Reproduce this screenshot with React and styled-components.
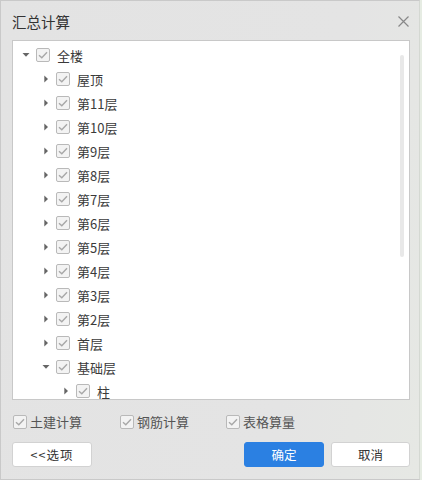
import React from 'react'
import styled, { createGlobalStyle } from 'styled-components'

const GlobalStyle = createGlobalStyle`
  html, body {
    margin: 0;
    padding: 0;
    background: #e6ece3;
  }
  body {
    font-family: "Noto Sans CJK SC", "Noto Sans", sans-serif;
    color: #333;
  }
`

const floors = ['屋顶', '第11层', '第10层', '第9层', '第8层', '第7层', '第6层', '第5层', '第4层', '第3层', '第2层', '首层']

const Dialog = styled.div`
  box-sizing: border-box;
  width: 420px;
  height: 480px;
  background: linear-gradient(100deg, #e3e3e3 0%, #e4e4e4 70%, #e6e8e4 100%);
  border: 1px solid #c9c9c9;
  border-right-color: #d4d8d2;
  display: flex;
  flex-direction: column;
  padding: 0 9px 0 11px;
`

const Header = styled.div`
  height: 39px;
  display: flex;
  align-items: center;
  justify-content: space-between;
  padding-top: 1px;
  box-sizing: border-box;
`

const Title = styled.span`
  font-size: 14.5px;
  color: #333;
`

const CloseButton = styled.button`
  border: none;
  background: transparent;
  padding: 0;
  width: 12px;
  height: 12px;
  margin-right: 1px;
  display: flex;
  align-items: center;
  justify-content: center;
  cursor: pointer;
`

const TreePanel = styled.div`
  box-sizing: border-box;
  height: 360px;
  background: #fff;
  border: 1px solid #c8c8c8;
  position: relative;
  overflow: hidden;
  padding-top: 2px;
`

const ScrollThumb = styled.div`
  position: absolute;
  right: 5px;
  top: 14px;
  width: 4px;
  height: 202px;
  border-radius: 2px;
  background: #e8e8e8;
`

const Row = styled.div`
  height: 24px;
  display: flex;
  align-items: center;
  padding-left: ${(p) => 7 + p.$level * 20}px;
`

const Arrow = styled.span`
  width: 12px;
  height: 12px;
  display: flex;
  align-items: center;
  justify-content: center;
  margin-right: 4px;
`

const Box = styled.span`
  box-sizing: border-box;
  width: 14px;
  height: 14px;
  border: 1px solid #b9b9b9;
  border-radius: 2px;
  background: #f3f3f3;
  display: inline-flex;
  align-items: center;
  justify-content: center;
  flex-shrink: 0;
`

const Label = styled.span`
  font-size: 13px;
  color: ${(p) => p.$color || '#3a3a3a'};
  margin-left: ${(p) => p.$gap || 7}px;
  line-height: 1;
`

const Options = styled.div`
  height: 42px;
  display: grid;
  grid-template-columns: 107px 106px 1fr;
  align-items: center;
  padding-left: 1px;
  padding-top: 1px;
  box-sizing: border-box;
`

const Option = styled.label`
  display: flex;
  align-items: center;
  font-size: 13px;
`

const Footer = styled.div`
  display: flex;
  align-items: center;
`

const Button = styled.button`
  box-sizing: border-box;
  width: ${(p) => p.$w || 80}px;
  height: 25px;
  border-radius: 3px;
  border: 1px solid ${(p) => (p.$primary ? '#2b80e2' : '#d2d2d2')};
  background: ${(p) => (p.$primary ? '#2b80e2' : '#fff')};
  color: ${(p) => (p.$primary ? '#fff' : '#333')};
  font-family: "Noto Sans CJK SC", "Noto Sans", sans-serif;
  font-size: 12.5px;
  padding: 0;
  margin-left: ${(p) => p.$ml || 0}px;
  cursor: pointer;
  letter-spacing: ${(p) => p.$ls || 0}px;
`

const Check = () => (
  <Box>
    <svg width="10" height="8" viewBox="0 0 10 8">
      <path d="M1 4.2 L3.8 6.8 L9 1.2" fill="none" stroke="#a8a8a8" strokeWidth="1.4" />
    </svg>
  </Box>
)

const Caret = ({ open }) => (
  <Arrow>
    <svg width="8" height="8" viewBox="0 0 8 8">
      {open ? (
        <path d="M0.5 2 L7.5 2 L4 5.8 Z" fill="#666" />
      ) : (
        <path d="M2.3 0.5 L6 4 L2.3 7.5 Z" fill="#666" />
      )}
    </svg>
  </Arrow>
)

const TreeRow = ({ level, open, text }) => (
  <Row $level={level}>
    <Caret open={open} />
    <Check />
    <Label>{text}</Label>
  </Row>
)

const App = () => {
  return (
    <>
      <GlobalStyle />
      <Dialog>
        <Header>
          <Title>汇总计算</Title>
          <CloseButton>
            <svg width="11" height="11" viewBox="0 0 11 11">
              <path d="M0.5 0.5 L10.5 10.5 M10.5 0.5 L0.5 10.5" stroke="#888" strokeWidth="1.2" />
            </svg>
          </CloseButton>
        </Header>
        <TreePanel>
          <TreeRow level={0} open text="全楼" />
          {floors.map((f) => (
            <TreeRow key={f} level={1} text={f} />
          ))}
          <TreeRow level={1} open text="基础层" />
          <TreeRow level={2} text="柱" />
          <ScrollThumb />
        </TreePanel>
        <Options>
          <Option>
            <Check />
            <Label $gap={3} $color="#555">土建计算</Label>
          </Option>
          <Option>
            <Check />
            <Label $gap={3} $color="#555">钢筋计算</Label>
          </Option>
          <Option>
            <Check />
            <Label $gap={3} $color="#555">表格算量</Label>
          </Option>
        </Options>
        <Footer>
          <Button $w={80} $ls={1}>{'<<选项'}</Button>
          <Button $primary $ml={152}>确定</Button>
          <Button $w={79} $ml={7}>取消</Button>
        </Footer>
      </Dialog>
    </>
  )
}

export default App
